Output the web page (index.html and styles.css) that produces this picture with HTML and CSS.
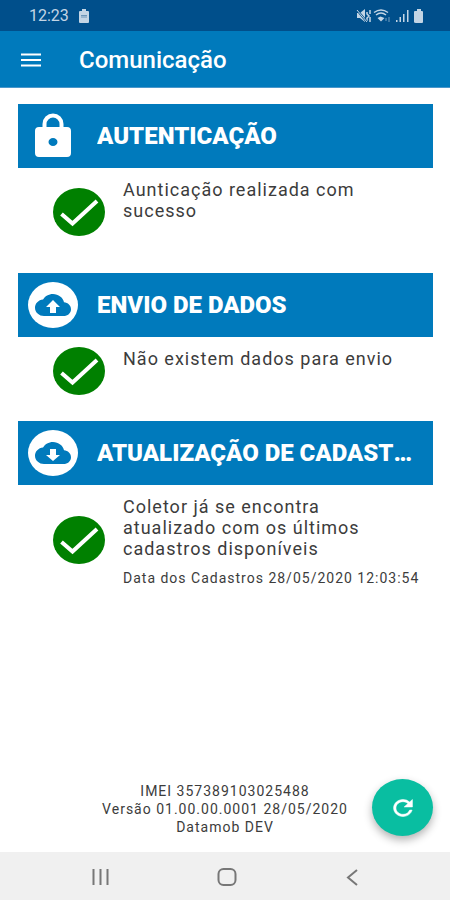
FILE: index.html
```html
<!DOCTYPE html>
<html lang="pt-BR">
<head>
<meta charset="utf-8">
<meta name="viewport" content="width=device-width, initial-scale=1">
<title>Comunicação</title>
<link rel="stylesheet" href="styles.css">
</head>
<body>
<svg class="defs" aria-hidden="true">
  <symbol id="check" viewBox="0 0 52 48" preserveAspectRatio="none">
    <ellipse cx="26" cy="24" rx="26" ry="24" fill="#008000"/>
    <path d="M8.500 26 19.500 35.500 44 13" fill="none" stroke="#fff" stroke-width="4"/>
  </symbol>
  <symbol id="cloud" viewBox="0 0 50 46">
    <ellipse cx="25" cy="23" rx="25" ry="23" fill="#fff"/>
    <path transform="translate(7 6.500) scale(1.500 1.380)" d="M19.350 10.040C18.670 6.590 15.640 4 12 4 9.110 4 6.600 5.640 5.350 8.040 2.340 8.360 0 10.910 0 14c0 3.310 2.690 6 6 6h13c2.760 0 5-2.240 5-5 0-2.640-2.050-4.780-4.650-4.960z" fill="#007abc"/>
  </symbol>
</svg>
<div class="status">
  <span class="clock">12:23</span>
  <svg class="card-icon" viewBox="0 0 12 14"><path d="M2 2h2V0h4v2h2q1 0 1 1v10q0 1-1 1H2q-1 0-1-1V3q0-1 1-1z" fill="#c3d5e5"/><path d="M3 6.500h6M3 8h6" stroke="#6c96b9" stroke-width="1"/></svg>
  <svg class="system-icons" viewBox="0 0 68 14">
    <g fill="#c3d5e5">
      <path d="M1 4h3l5-4v13L4 9H1z"/>
      <path d="M59 2h2V0h4v2h1q1 0 1 1v10q0 1-1 1h-6q-2 0-2-1V3q0-1 1-1z"/>
      <path d="M40 11h1.500v2H40zM43.500 8H45v5h-1.500zM47 5h1.500v8H47zM51 1h1.500v12H51z"/>
      <path d="m24.500 7.500 4 1.500-3.500 3.500-3.500-3.500z"/>
    </g>
    <g fill="none" stroke="#c3d5e5" stroke-width="1.500">
      <path d="M11 3v2l2 2-2 2v3M14 1v4M14 8v5"/>
      <path d="M18 3.500q7-5 14 0M20 6q5-4 10 0"/>
      <path d="M30 9v3M33 8v5" stroke-width="1" opacity=".6"/>
    </g>
    <path d="m1 1 10 12" stroke="#004f8b" stroke-width="2"/>
    <path d="m1 1 10 12" stroke="#c3d5e5" stroke-width="1"/>
  </svg>
</div>
<header class="app-bar">
  <button class="menu" type="button" aria-label="Menu">
    <svg viewBox="0 0 20 14"><path d="M0 1.500h20M0 7h20M0 12.500h20" stroke="#fff" stroke-width="2.200"/></svg>
  </button>
  <h1>Comunicação</h1>
</header>
<main>
  <section>
    <div class="heading">
      <svg class="badge" viewBox="0 0 50 46">
        <path d="M16.500 15V11a8.500 8.500 0 0 1 17 0v4" fill="none" stroke="#fff" stroke-width="4"/>
        <path fill-rule="evenodd" fill="#fff" d="M11 14h28q4 0 4 4v22q0 4-4 4H11q-4 0-4-4V18q0-4 4-4zM25 25a4.500 4 0 1 0 0 8 4.500 4 0 1 0 0-8z"/>
      </svg>
      <h2>AUTENTICAÇÃO</h2>
    </div>
    <div class="result">
      <svg class="check"><use href="#check"/></svg>
      <div class="text"><p class="message">Aunticação realizada com sucesso</p><p class="note"></p></div>
    </div>
  </section>
  <section>
    <div class="heading">
      <svg class="badge" viewBox="0 0 50 46">
        <use href="#cloud"/>
        <path d="m25 18 7 7h-4v6h-6v-6h-4z" fill="#fff"/>
      </svg>
      <h2>ENVIO DE DADOS</h2>
    </div>
    <div class="result">
      <svg class="check"><use href="#check"/></svg>
      <div class="text"><p class="message">Não existem dados para envio</p><p class="note"></p></div>
    </div>
  </section>
  <section>
    <div class="heading">
      <svg class="badge" viewBox="0 0 50 46">
        <use href="#cloud"/>
        <path d="m25 31-7-6h4v-6h6v6h4z" fill="#fff"/>
      </svg>
      <h2>ATUALIZAÇÃO DE CADASTROS</h2>
    </div>
    <div class="result">
      <svg class="check"><use href="#check"/></svg>
      <div class="text"><p class="message">Coletor já se encontra atualizado com os últimos cadastros disponíveis</p><p class="note">Data dos Cadastros 28/05/2020 12:03:54</p></div>
    </div>
  </section>
</main>
<footer>
  <p>IMEI 357389103025488</p>
  <p>Versão 01.00.00.0001 28/05/2020</p>
  <p>Datamob DEV</p>
  <button class="fab" type="button" aria-label="Atualizar">
    <svg viewBox="3.500 3.500 17 17" preserveAspectRatio="none"><path d="M17.650 6.350A7.958 7.958 0 0 0 12 4c-4.420 0-7.990 3.580-7.990 8s3.570 8 7.990 8c3.730 0 6.840-2.550 7.730-6h-2.080A5.990 5.990 0 0 1 12 18c-3.310 0-6-2.690-6-6s2.690-6 6-6c1.660 0 3.140.690 4.220 1.780L13 11h7V4z" fill="#fff" stroke="#fff" stroke-width=".5"/></svg>
  </button>
</footer>
<nav class="system-nav">
  <button type="button" aria-label="Recentes"><svg viewBox="0 0 20 20"><path d="M2.500 2v16M9.500 2v16M16.500 2v16"/></svg></button>
  <button type="button" aria-label="Início"><svg viewBox="0 0 20 20"><rect x="1.500" y="2" width="17" height="16" rx="5"/></svg></button>
  <button type="button" aria-label="Voltar"><svg viewBox="0 0 20 20"><path d="M14 3 5 10.500l9 7.500"/></svg></button>
</nav>
</body>
</html>
```
FILE: styles.css
```css
* { box-sizing: border-box; }

body {
  margin: 0;
  min-height: 100vh;
  display: flex;
  flex-direction: column;
  background: #fff;
  color: #3c3c3c;
  font-family: Roboto, "Liberation Sans", sans-serif;
}

h1, h2, p { margin: 0; }
svg { display: block; flex: none; }
button { border: 0; padding: 0; background: none; }

.defs { position: absolute; width: 0; height: 0; }

.status {
  display: flex;
  align-items: center;
  height: 31px;
  padding: 0 26px 0 29px;
  background: #004f8b;
  color: #c3d5e5;
}

.clock { font-size: 16px; }
.card-icon { width: 12px; height: 14px; margin-left: 9px; }
.system-icons { width: 68px; height: 14px; margin-left: auto; }

.app-bar {
  display: flex;
  align-items: center;
  gap: 38px;
  height: 57px;
  padding: 2px 21px 0;
  background: #007abc;
  border-bottom: 1px solid #4a97cb;
  color: #fff;
}

.menu svg { width: 20px; height: 14px; }
.app-bar h1 { font-size: 24px; font-weight: 500; line-height: 32px; }

main { flex: 1; padding: 16px 17px 0 18px; }
section { margin-bottom: 17px; }

.heading {
  display: flex;
  align-items: center;
  gap: 19px;
  height: 64px;
  padding: 0 14px 0 10px;
  background: #007abc;
  color: #fff;
}

.badge { width: 50px; height: 46px; }

.heading h2 {
  flex: 1;
  min-width: 0;
  overflow: hidden;
  white-space: nowrap;
  text-overflow: ellipsis;
  font-size: 24px;
  font-weight: 900;
  line-height: 32px;
}

.result {
  display: flex;
  align-items: center;
  gap: 18px;
  padding-left: 35px;
}

.check { width: 52px; height: 48px; }

.text {
  flex: 1;
  padding: 11px 0 10px;
  letter-spacing: 1px;
}

.message {
  padding-right: 24px;
  font-size: 18px;
  line-height: 21px;
}

.note {
  min-height: 16px;
  margin-top: 11px;
  margin-bottom: -2px;
  font-size: 14px;
  line-height: 16px;
}

footer {
  position: relative;
  padding: 0 17px 16px;
  text-align: center;
  font-size: 14px;
  line-height: 18px;
  letter-spacing: 1px;
}

.fab {
  position: absolute;
  right: 17px;
  bottom: 16px;
  display: grid;
  place-items: center;
  width: 61px;
  height: 57px;
  border-radius: 50%;
  background: #09bea1;
  box-shadow: 0 4px 8px rgba(0, 0, 0, .3);
}

.fab svg { width: 20px; height: 18px; }

.system-nav {
  display: flex;
  justify-content: center;
  gap: 106px;
  height: 48px;
  padding: 2px 0 0 4px;
  background: #f0f0f0;
}

.system-nav svg {
  width: 20px;
  height: 20px;
  fill: none;
  stroke: #777;
  stroke-width: 2;
}
```
